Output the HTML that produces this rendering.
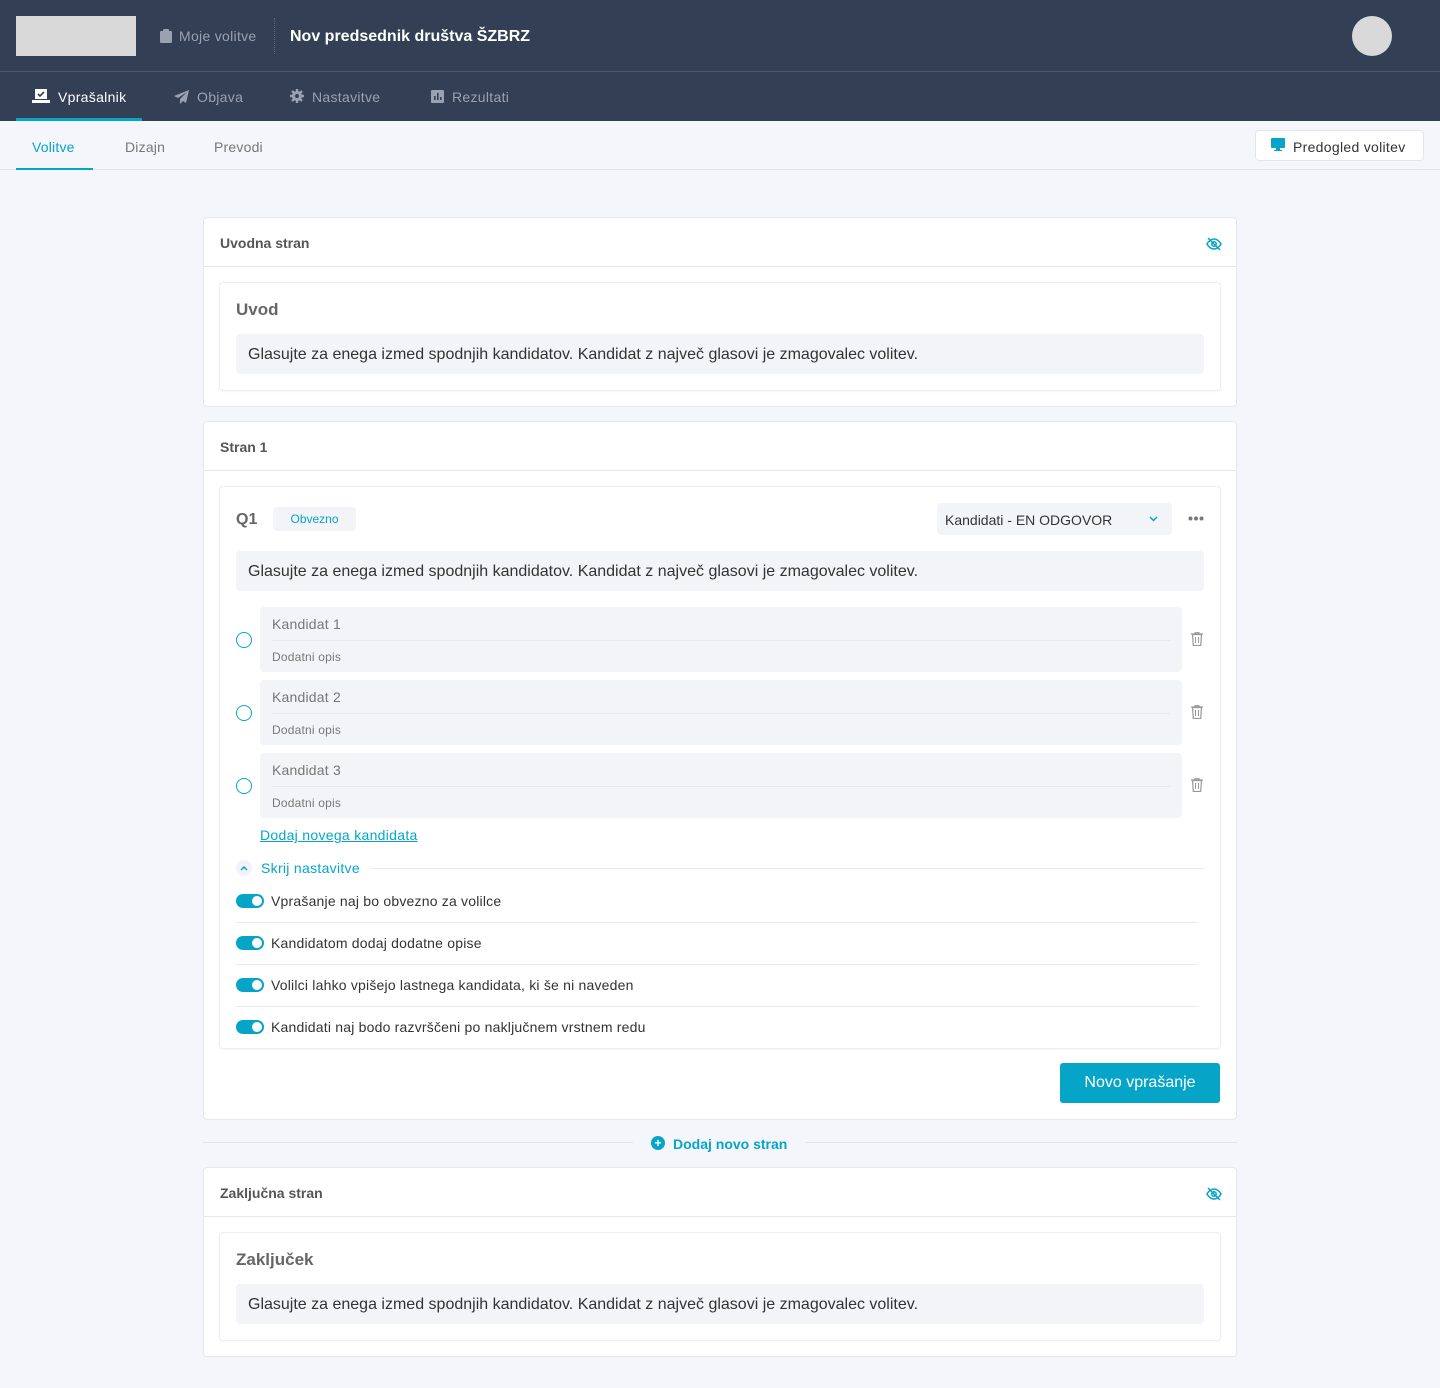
<!DOCTYPE html>
<html><head><meta charset="utf-8"><style>
*{box-sizing:border-box;margin:0;padding:0}
body{width:1440px;height:1388px;background:#f4f6fb;font-family:"Liberation Sans",sans-serif;color:#333;position:relative;overflow:hidden}
.abs{position:absolute}
.hdr{left:0;top:0;width:1440px;height:121px;background:#333f55}
.hline{left:0;top:71px;width:1440px;height:1px;background:#4d586c}
.card{position:absolute;left:203px;width:1034px;background:#fff;border:1px solid #e6e8ee;border-radius:4px}
.ch{height:49px;border-bottom:1px solid #e6e8ee;padding:17px 16px;font-size:14px;color:#555;font-weight:bold;font-weight:600}
.inner{position:absolute;left:15px;width:1002px;background:#fff;border:1px solid #eceef2;border-radius:4px;box-shadow:0 1px 3px rgba(0,0,0,.04)}
.box{position:absolute;left:16px;width:968px;height:40px;background:#f3f4f7;border-radius:4px;font-size:16px;color:#333;padding:12px 12px 0}
.cand{position:absolute;left:40px;width:922px;height:65px;background:#f3f4f7;border-radius:4px}
.cand .t{position:absolute;left:12px;top:9px;font-size:14px;color:#777;letter-spacing:.2px}
.cand .l{position:absolute;left:12px;right:12px;top:33px;height:1px;background:#e6e8ec}
.cand .d{position:absolute;left:12px;top:43px;font-size:12px;color:#777;letter-spacing:.2px}
.radio{position:absolute;left:16px;width:16px;height:16px;border:1.5px solid #06a5c8;border-radius:50%}
.trash{position:absolute;left:971px}
.tog{position:absolute;left:16px;width:28px;height:14px;border-radius:7px;background:#06a5c8}
.tog:after{content:"";position:absolute;right:2px;top:2px;width:10px;height:10px;border-radius:50%;background:#fff}
.tl{position:absolute;left:51px;font-size:14px;color:#333;letter-spacing:.2px}
.sep{position:absolute;left:16px;width:962px;height:1px;background:#e8eaee}
</style></head><body>
<div class="abs hdr"></div>
<div class="abs hline"></div>
<div class="abs" style="left:16px;top:16px;width:120px;height:40px;background:#d9d9d9"></div>
<svg class="abs" style="left:160px;top:29px" width="12" height="14" viewBox="0 0 12 14"><rect x="0" y="2" width="12" height="12" rx="1" fill="#9aa2b1"/><rect x="3" y="0" width="6" height="3" rx="1" fill="#9aa2b1"/></svg>
<div class="abs" style="left:179px;top:28px;font-size:14px;color:#9aa2b1;letter-spacing:.3px">Moje volitve</div>
<div class="abs" style="left:274px;top:18px;width:1px;height:36px;border-left:1px dotted #5a6578"></div>
<div class="abs" style="left:290px;top:28px;font-size:16px;color:#fff;font-weight:bold">Nov predsednik društva ŠZBRZ</div>
<div class="abs" style="left:1352px;top:16px;width:40px;height:40px;border-radius:50%;background:#d9d9d9"></div>
<svg class="abs" style="left:32px;top:89px" width="18" height="15" viewBox="0 0 18 15"><rect x="3" y="0" width="12" height="10" fill="#fff"/><path d="M6 5l2 2 4-4" stroke="#333f55" stroke-width="1.6" fill="none"/><rect x="0" y="11" width="18" height="3" fill="#fff"/></svg>
<div class="abs" style="left:58px;top:89px;font-size:14px;color:#fff;letter-spacing:.3px">Vprašalnik</div>
<div class="abs" style="left:16px;top:118px;width:126px;height:3px;background:#06a5c8"></div>
<svg class="abs" style="left:174px;top:90px" width="15" height="14" viewBox="0 0 15 14"><path d="M15 0L0 6l4 2 9-6-7 7v5l3-3 3 2z" fill="#9aa2b1"/></svg>
<div class="abs" style="left:197px;top:89px;font-size:14px;color:#9aa2b1;letter-spacing:.3px">Objava</div>
<svg class="abs" style="left:290px;top:89px" width="14" height="14" viewBox="0 0 14 14"><circle cx="7" cy="7" r="5" fill="#9aa2b1"/><path d="M7 0v14M0 7h14M2 2l10 10M12 2L2 12" stroke="#9aa2b1" stroke-width="2.4"/><circle cx="7" cy="7" r="2" fill="#333f55"/></svg>
<div class="abs" style="left:312px;top:89px;font-size:14px;color:#9aa2b1;letter-spacing:.3px">Nastavitve</div>
<svg class="abs" style="left:431px;top:90px" width="13" height="13" viewBox="0 0 13 13"><rect width="13" height="13" rx="1" fill="#9aa2b1"/><rect x="3" y="6" width="1.6" height="4" fill="#333f55"/><rect x="6" y="3" width="1.6" height="7" fill="#333f55"/><rect x="9" y="7" width="1.6" height="3" fill="#333f55"/></svg>
<div class="abs" style="left:452px;top:89px;font-size:14px;color:#9aa2b1;letter-spacing:.3px">Rezultati</div>

<div class="abs" style="left:0;top:169px;width:1440px;height:1px;background:#e3e5ea"></div>
<div class="abs" style="left:32px;top:139px;font-size:14px;color:#06a5c8;letter-spacing:.2px">Volitve</div>
<div class="abs" style="left:16px;top:168px;width:77px;height:2px;background:#06a5c8"></div>
<div class="abs" style="left:125px;top:139px;font-size:14px;color:#777;letter-spacing:.2px">Dizajn</div>
<div class="abs" style="left:214px;top:139px;font-size:14px;color:#777;letter-spacing:.2px">Prevodi</div>
<div class="abs" style="left:1255px;top:130px;width:169px;height:31px;background:#fff;border:1px solid #e3e5ea;border-radius:4px"></div>
<svg class="abs" style="left:1271px;top:138px" width="14" height="13" viewBox="0 0 14 13"><rect x="0" y="0" width="14" height="10" rx="1" fill="#06a5c8"/><rect x="5" y="10" width="4" height="2" fill="#06a5c8"/><rect x="3" y="12" width="8" height="1" fill="#06a5c8"/></svg>
<div class="abs" style="left:1293px;top:139px;font-size:14px;color:#333;letter-spacing:.3px">Predogled volitev</div>

<svg width="0" height="0" style="position:absolute"><defs><symbol id="eye" viewBox="0 0 16 14"><path d="M1 7c2-3.5 4.5-5 7-5s5 1.5 7 5c-2 3.5-4.5 5-7 5S3 10.5 1 7z" fill="none" stroke="#06a5c8" stroke-width="1.5"/><circle cx="8" cy="7" r="2.2" fill="none" stroke="#06a5c8" stroke-width="1.5"/><path d="M2 1l12 12" stroke="#06a5c8" stroke-width="1.5"/></symbol>
<symbol id="trash" viewBox="0 0 12 14"><path d="M0 2h12M4 2V0.7h4V2M1.5 2.5l.8 11h7.4l.8-11z" fill="none" stroke="#999" stroke-width="1.2"/><path d="M4.5 5v6M7.5 5v6" stroke="#999"/></symbol></defs></svg>

<div class="card" style="top:217px;height:190px">
<div class="ch">Uvodna stran</div>
<svg class="abs" style="left:1002px;top:19px" width="16" height="14"><use href="#eye"/></svg>
<div class="inner" style="top:64px;height:109px">
<div class="abs" style="left:16px;top:17px;font-size:17px;color:#666;font-weight:bold">Uvod</div>
<div class="box" style="top:51px">Glasujte za enega izmed spodnjih kandidatov. Kandidat z največ glasovi je zmagovalec volitev.</div>
</div></div>

<div class="card" style="top:421px;height:699px">
<div class="ch">Stran 1</div>
<div class="inner" style="top:64px;height:563px">
<div class="abs" style="left:16px;top:24px;font-size:16px;color:#666;font-weight:bold">Q1</div>
<div class="abs" style="left:53px;top:20px;width:83px;height:24px;background:#f3f4f8;border-radius:4px;font-size:12px;color:#06a5c8;text-align:center;line-height:24px">Obvezno</div>
<div class="abs" style="left:717px;top:16px;width:235px;height:32px;background:#f3f4f8;border-radius:4px;font-size:14px;color:#333;padding:9px 8px 0"><span>Kandidati - EN ODGOVOR</span><svg style="position:absolute;right:14px;top:13px" width="9" height="6"><path d="M1 1l3.5 3.5L8 1" stroke="#06a5c8" stroke-width="1.5" fill="none"/></svg></div>
<svg class="abs" style="left:968px;top:29px" width="16" height="5"><circle cx="2.5" cy="2.5" r="2" fill="#777"/><circle cx="8" cy="2.5" r="2" fill="#777"/><circle cx="13.5" cy="2.5" r="2" fill="#777"/></svg>
<div class="box" style="top:64px">Glasujte za enega izmed spodnjih kandidatov. Kandidat z največ glasovi je zmagovalec volitev.</div>

<div class="radio" style="top:145px"></div><div class="cand" style="top:120px"><div class="t">Kandidat 1</div><div class="l"></div><div class="d">Dodatni opis</div></div><svg class="trash" style="top:145px" width="12" height="14"><use href="#trash"/></svg>
<div class="radio" style="top:218px"></div><div class="cand" style="top:193px"><div class="t">Kandidat 2</div><div class="l"></div><div class="d">Dodatni opis</div></div><svg class="trash" style="top:218px" width="12" height="14"><use href="#trash"/></svg>
<div class="radio" style="top:291px"></div><div class="cand" style="top:266px"><div class="t">Kandidat 3</div><div class="l"></div><div class="d">Dodatni opis</div></div><svg class="trash" style="top:291px" width="12" height="14"><use href="#trash"/></svg>

<div class="abs" style="left:40px;top:340px;font-size:14px;color:#06a5c8;text-decoration:underline;letter-spacing:.3px">Dodaj novega kandidata</div>
<div class="abs" style="left:16px;top:373px;width:16px;height:16px;border-radius:50%;background:#f0f3f9"></div>
<svg class="abs" style="left:20px;top:378px" width="8" height="6"><path d="M1 5l3-3 3 3" stroke="#06a5c8" stroke-width="1.5" fill="none"/></svg>
<div class="abs" style="left:41px;top:373px;font-size:14px;color:#06a5c8;letter-spacing:.3px">Skrij nastavitve</div>
<div class="abs" style="left:150px;top:381px;width:834px;height:1px;background:#e8eaef"></div>

<div class="tog" style="top:407px"></div><div class="tl" style="top:406px">Vprašanje naj bo obvezno za volilce</div>
<div class="sep" style="top:435px"></div>
<div class="tog" style="top:449px"></div><div class="tl" style="top:448px">Kandidatom dodaj dodatne opise</div>
<div class="sep" style="top:477px"></div>
<div class="tog" style="top:491px"></div><div class="tl" style="top:490px">Volilci lahko vpišejo lastnega kandidata, ki še ni naveden</div>
<div class="sep" style="top:519px"></div>
<div class="tog" style="top:533px"></div><div class="tl" style="top:532px">Kandidati naj bodo razvrščeni po naključnem vrstnem redu</div>
</div>
<div class="abs" style="left:856px;top:641px;width:160px;height:40px;background:#06a5c8;border-radius:3px;color:#fff;font-size:16px;text-align:center;line-height:40px">Novo vprašanje</div>
</div>

<div class="abs" style="left:203px;top:1142px;width:430px;height:1px;background:#e3e5ea"></div>
<div class="abs" style="left:805px;top:1142px;width:432px;height:1px;background:#e3e5ea"></div>
<div class="abs" style="left:651px;top:1136px;width:14px;height:14px;border-radius:50%;background:#06a5c8;color:#fff;font-size:12px;line-height:14px;text-align:center;font-weight:bold">+</div>
<div class="abs" style="left:673px;top:1136px;font-size:14px;color:#06a5c8;font-weight:bold">Dodaj novo stran</div>

<div class="card" style="top:1167px;height:190px">
<div class="ch">Zaključna stran</div>
<svg class="abs" style="left:1002px;top:19px" width="16" height="14"><use href="#eye"/></svg>
<div class="inner" style="top:64px;height:109px">
<div class="abs" style="left:16px;top:17px;font-size:17px;color:#666;font-weight:bold">Zaključek</div>
<div class="box" style="top:51px">Glasujte za enega izmed spodnjih kandidatov. Kandidat z največ glasovi je zmagovalec volitev.</div>
</div></div>
</body></html>
